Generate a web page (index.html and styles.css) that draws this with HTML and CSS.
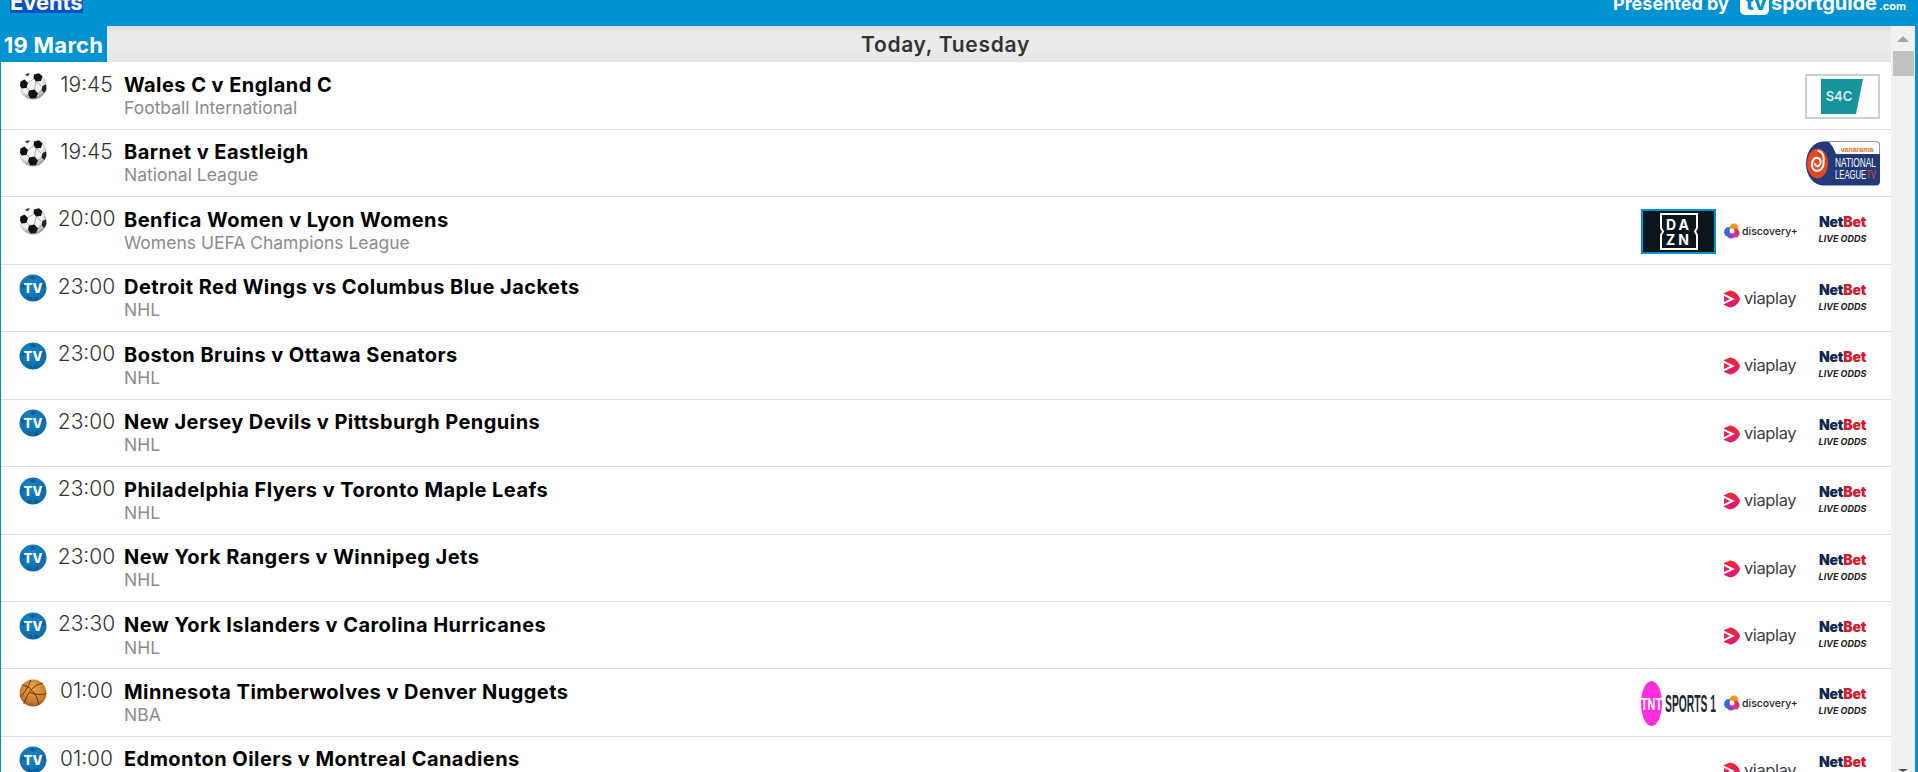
FILE: index.html
```html
<!DOCTYPE html>
<html lang="en">
<head>
<meta charset="utf-8">
<title>Events</title>
<link rel="stylesheet" href="styles.css">
</head>
<body>
<svg class="defs" width="0" height="0">
  <defs>
    <radialGradient id="ballShade" cx="42%" cy="35%" r="72%">
      <stop offset="0" stop-color="#ffffff"/><stop offset=".6" stop-color="#f0f0f0"/><stop offset="1" stop-color="#7a7a7a"/>
    </radialGradient>
    <radialGradient id="bbShade" cx="50%" cy="35%" r="70%">
      <stop offset="0" stop-color="#e9a54c"/><stop offset=".7" stop-color="#c97a2c"/><stop offset="1" stop-color="#8a4a1c"/>
    </radialGradient>
    <radialGradient id="tvShade" cx="45%" cy="35%" r="70%">
      <stop offset="0" stop-color="#1a86c8"/><stop offset="1" stop-color="#0b68a6"/>
    </radialGradient>
    <linearGradient id="viaGrad" x1="0" y1="0" x2="0" y2="1">
      <stop offset="0" stop-color="#ee2a2f"/><stop offset="1" stop-color="#e0187c"/>
    </linearGradient>
    <symbol id="soccer" viewBox="0 0 28 28">
      <circle cx="14" cy="14" r="13.5" fill="url(#ballShade)"/>
      <path d="M15 2.500l5-1.200 3.500 3-1.500 4.700-5 .5-2.500-3.500z" fill="#111"/>
      <path d="M1.500 9.500l4-2 3.500 3.500-1.500 5-5 .5-1.500-3z" fill="#111"/>
      <path d="M10 18.500l5.500-1 3.500 4-2 4.500-5.500 .5-2.500-4z" fill="#111"/>
      <path d="M23.500 14l3.500-1.500 .5 4.500-2 4-3-2.500z" fill="#222"/>
      <path d="M6 2.800l3-1.500 2 .5-2.500 2.500z" fill="#333"/>
      <path d="M15 6.500L9 11M17 9.500l5 4.500M8 15.500l2 3M15.500 17.500l1.500-8M19 21.500l3-2.500M7.500 25l2-3" stroke="#777" stroke-width=".6" fill="none"/>
    </symbol>
    <symbol id="basket" viewBox="0 0 26 26">
      <circle cx="13" cy="13" r="12.500" fill="url(#bbShade)"/>
      <path d="M3 5.500c6 1 13 6 15.500 18.500M11 .8C8 8 5 14 .8 16.500M22 4c-7 1-13 6-17.500 19M10 12.500c5 2 11 2.500 15.500 1" stroke="#5b3216" stroke-width=".9" fill="none"/>
    </symbol>
    <symbol id="tv" viewBox="0 0 28 28">
      <circle cx="14" cy="14" r="13.500" fill="url(#tvShade)"/>
      <path d="M14 1.500l3.500 2.500L14 6l-3.500-2zM3.500 9l3 1-1 4-3.500-1zM24.500 9l-3 1 1 4 3.500-1zM9 22.500l4 1v3.500l-4-1zM19 22.500l-4 1v3.500l4-1z" fill="#0c5f98"/>
      <text x="14" y="19" text-anchor="middle" class="tv-mark">TV</text>
    </symbol>
    <symbol id="viaplay" viewBox="0 0 75 20">
      <path d="M1 4L7 1.500C12 2 16 6 17 10c-1 4-5 8-10 8.500L1 16z" fill="url(#viaGrad)"/>
      <path d="M0 5.500L9.500 10 0 14.500" fill="none" stroke="#ffffff" stroke-width="2"/>
      <text x="21" y="15" class="via-mark">viaplay</text>
    </symbol>
    <symbol id="discovery" viewBox="0 0 75 20">
      <circle cx="6" cy="11" r="5" fill="#2a6fdb"/>
      <circle cx="11" cy="7" r="4.500" fill="#f39a1f"/>
      <circle cx="12" cy="12" r="4.500" fill="#e3306f"/>
      <circle cx="8" cy="14" r="3.500" fill="#8b3fd1"/>
      <circle cx="9" cy="10" r="2.500" fill="#ffffff"/>
      <text x="19" y="14" class="disc-mark">discovery+</text>
    </symbol>
    <symbol id="dazn" viewBox="0 0 75 45">
      <rect x="1" y="1" width="73" height="43" fill="#0b161c" stroke="#0092d1" stroke-width="2"/>
      <path d="M20 5h36v14l-2 3.500 2 3.500v14H20V26l2-3.500-2-3.500z" fill="none" stroke="#ffffff" stroke-width="2"/>
      <text x="38" y="21" text-anchor="middle" class="dazn-mark">DA</text>
      <text x="38" y="36" text-anchor="middle" class="dazn-mark">ZN</text>
    </symbol>
    <symbol id="tnt" viewBox="0 0 75 45">
      <ellipse cx="10.500" cy="22.500" rx="10.500" ry="22.500" fill="#ff2fe0"/>
      <text x="0" y="29" class="tnt-mark" textLength="21" lengthAdjust="spacingAndGlyphs">TNT</text>
      <text x="24" y="31" class="tnt-sports" textLength="51" lengthAdjust="spacingAndGlyphs">SPORTS 1</text>
    </symbol>
    <symbol id="s4c" viewBox="0 0 75 45">
      <rect x="1" y="1" width="73" height="43" fill="#ffffff" stroke="#cfcfcf" stroke-width="2"/>
      <path d="M16 5h42l-7 35H16z" fill="#16939b"/>
      <text x="34" y="27" text-anchor="middle" class="s4c-mark">S4C</text>
    </symbol>
    <symbol id="nltv" viewBox="0 0 75 45">
      <path d="M18 .5h53a4 4 0 0 1 4 4v36a4 4 0 0 1-4 4H18a17 22 0 0 1 0-44z" fill="#22397a"/>
      <path d="M24 1h47a3.500 3.500 0 0 1 3.500 3.500V13H31c-2-5-4-9-7-12z" fill="#ffffff"/>
      <ellipse cx="12.500" cy="22.500" rx="10.500" ry="15" fill="#e8441f"/>
      <path d="M12.500 10c6 0 7 7 6 13-1 7-8 9-11 4-2-5 1-11 5-10 4 .5 4 6 1 8-2 1-4-1-3-3" fill="none" stroke="#ffffff" stroke-width="2"/>
      <text x="52" y="10.500" text-anchor="middle" class="nl-top">vanarama</text>
      <text x="30" y="26" class="nl-mark" textLength="41" lengthAdjust="spacingAndGlyphs">NATIONAL</text>
      <text x="30" y="38" class="nl-mark" textLength="41" lengthAdjust="spacingAndGlyphs">LEAGUE<tspan fill="#e8441f">TV</tspan></text>
    </symbol>
  </defs>
</svg>

<div class="page">
  <header class="topbar">
    <span class="events">Events</span>
    <div class="presented">
      <span class="presented-by">Presented by</span>
      <span class="tv-box">tv</span>
      <span class="brand">sportguide</span><span class="brand-com">.com</span>
    </div>
  </header>
  <div class="main">
    <div class="content">
      <div class="daybar">
        <div class="date">19 March</div>
        <div class="dayname">Today, Tuesday</div>
      </div>
      <div class="rows">
        <div class="row">
          <svg class="sport"><use href="#soccer"/></svg>
          <div class="time">19:45</div>
          <div class="info"><div class="title">Wales C v England C</div><div class="sub">Football International</div></div>
          <div class="slots"><svg class="logo"><use href="#s4c"/></svg></div>
        </div>
        <div class="row">
          <svg class="sport"><use href="#soccer"/></svg>
          <div class="time">19:45</div>
          <div class="info"><div class="title">Barnet v Eastleigh</div><div class="sub">National League</div></div>
          <div class="slots"><svg class="logo"><use href="#nltv"/></svg></div>
        </div>
        <div class="row">
          <svg class="sport"><use href="#soccer"/></svg>
          <div class="time">20:00</div>
          <div class="info"><div class="title">Benfica Women v Lyon Womens</div><div class="sub">Womens UEFA Champions League</div></div>
          <div class="slots">
            <svg class="logo"><use href="#dazn"/></svg>
            <svg class="strip"><use href="#discovery"/></svg>
            <div class="odds"><div class="netbet">Net<span class="bet">Bet</span></div><div class="live">LIVE ODDS</div></div>
          </div>
        </div>
        <div class="row">
          <svg class="sport"><use href="#tv"/></svg>
          <div class="time">23:00</div>
          <div class="info"><div class="title">Detroit Red Wings vs Columbus Blue Jackets</div><div class="sub">NHL</div></div>
          <div class="slots">
            <svg class="strip"><use href="#viaplay"/></svg>
            <div class="odds"><div class="netbet">Net<span class="bet">Bet</span></div><div class="live">LIVE ODDS</div></div>
          </div>
        </div>
        <div class="row">
          <svg class="sport"><use href="#tv"/></svg>
          <div class="time">23:00</div>
          <div class="info"><div class="title">Boston Bruins v Ottawa Senators</div><div class="sub">NHL</div></div>
          <div class="slots">
            <svg class="strip"><use href="#viaplay"/></svg>
            <div class="odds"><div class="netbet">Net<span class="bet">Bet</span></div><div class="live">LIVE ODDS</div></div>
          </div>
        </div>
        <div class="row">
          <svg class="sport"><use href="#tv"/></svg>
          <div class="time">23:00</div>
          <div class="info"><div class="title">New Jersey Devils v Pittsburgh Penguins</div><div class="sub">NHL</div></div>
          <div class="slots">
            <svg class="strip"><use href="#viaplay"/></svg>
            <div class="odds"><div class="netbet">Net<span class="bet">Bet</span></div><div class="live">LIVE ODDS</div></div>
          </div>
        </div>
        <div class="row">
          <svg class="sport"><use href="#tv"/></svg>
          <div class="time">23:00</div>
          <div class="info"><div class="title">Philadelphia Flyers v Toronto Maple Leafs</div><div class="sub">NHL</div></div>
          <div class="slots">
            <svg class="strip"><use href="#viaplay"/></svg>
            <div class="odds"><div class="netbet">Net<span class="bet">Bet</span></div><div class="live">LIVE ODDS</div></div>
          </div>
        </div>
        <div class="row">
          <svg class="sport"><use href="#tv"/></svg>
          <div class="time">23:00</div>
          <div class="info"><div class="title">New York Rangers v Winnipeg Jets</div><div class="sub">NHL</div></div>
          <div class="slots">
            <svg class="strip"><use href="#viaplay"/></svg>
            <div class="odds"><div class="netbet">Net<span class="bet">Bet</span></div><div class="live">LIVE ODDS</div></div>
          </div>
        </div>
        <div class="row">
          <svg class="sport"><use href="#tv"/></svg>
          <div class="time">23:30</div>
          <div class="info"><div class="title">New York Islanders v Carolina Hurricanes</div><div class="sub">NHL</div></div>
          <div class="slots">
            <svg class="strip"><use href="#viaplay"/></svg>
            <div class="odds"><div class="netbet">Net<span class="bet">Bet</span></div><div class="live">LIVE ODDS</div></div>
          </div>
        </div>
        <div class="row">
          <svg class="sport"><use href="#basket"/></svg>
          <div class="time">01:00</div>
          <div class="info"><div class="title">Minnesota Timberwolves v Denver Nuggets</div><div class="sub">NBA</div></div>
          <div class="slots">
            <svg class="logo"><use href="#tnt"/></svg>
            <svg class="strip"><use href="#discovery"/></svg>
            <div class="odds"><div class="netbet">Net<span class="bet">Bet</span></div><div class="live">LIVE ODDS</div></div>
          </div>
        </div>
        <div class="row">
          <svg class="sport"><use href="#tv"/></svg>
          <div class="time">01:00</div>
          <div class="info"><div class="title">Edmonton Oilers v Montreal Canadiens</div><div class="sub">NHL</div></div>
          <div class="slots">
            <svg class="strip"><use href="#viaplay"/></svg>
            <div class="odds"><div class="netbet">Net<span class="bet">Bet</span></div><div class="live">LIVE ODDS</div></div>
          </div>
        </div>
      </div>
    </div>
    <div class="scrollbar">
      <div class="arrow-up"></div>
      <div class="thumb"></div>
      <div class="track"></div>
      <div class="arrow-down"></div>
    </div>
  </div>
</div>
</body>
</html>
```
FILE: styles.css
```css
* { box-sizing: border-box; }
html, body { margin: 0; height: 100%; overflow: hidden; background: #fff; }
.defs { display: block; width: 0; height: 0; }
.page {
  width: 1918px;
  height: 772px;
  display: flex;
  flex-direction: column;
  font-family: Inter, "Liberation Sans", sans-serif;
  overflow: hidden;
}
.topbar {
  flex: 0 0 26px;
  background: #0092d1;
  color: #fff;
  display: flex;
  justify-content: space-between;
  align-items: flex-end;
  padding: 0 12px 13px 10px;
  overflow: hidden;
  line-height: 20px;
}
.events {
  background: #0a50c8;
  width: 73px;
  font-size: 22px;
  font-weight: 700;
  line-height: 22px;
  height: 22px;
  margin-top: -9px;
  letter-spacing: -0.1px;
}
.presented { display: flex; align-items: baseline; height: 20px; margin-top: -7px; }
.presented-by { font-size: 18px; font-weight: 700; margin-right: 9px; letter-spacing: 0; width: 118px; white-space: nowrap; }
.tv-box {
  background: #fff;
  color: #0092d1;
  border-radius: 5px;
  font-size: 20px;
  font-weight: 800;
  padding: 0 6px;
  margin-right: 2px;
  width: 29px;
  height: 21px;
  line-height: 19px;
}
.brand { font-size: 20px; font-weight: 700; letter-spacing: -0.1px; width: 108px; white-space: nowrap; }
.brand-com { font-size: 11px; font-weight: 700; }

.main {
  flex: 1;
  min-height: 0;
  display: flex;
  border-right: 3px solid #0092d1;
  border-left: 1px solid #0092d1;
}
.content { flex: 1; min-width: 0; display: flex; flex-direction: column; }
.daybar {
  position: relative;
  flex: 0 0 36px;
  min-height: 0;
  height: 36px;
  margin-left: -1px;
  background: linear-gradient(#dcdcdc 0, #ebebeb 22%, #ebebeb 65%, #e4e4e4 100%);
  text-align: center;
  font-size: 21px;
  font-weight: 600;
  color: #333;
  line-height: 36px;
  letter-spacing: .7px;
}
.dayname { padding-top: 1px; height: 36px; }
.date {
  position: absolute;
  left: 0;
  top: 0;
  width: 107px;
  height: 36px;
  padding-top: 1px;
  background: #0092d1;
  color: #fff;
  font-size: 22px;
  font-weight: 700;
  text-align: center;
  white-space: nowrap;
  letter-spacing: .3px;
}
.rows { flex: 1; min-height: 0; overflow: hidden; padding-top: .56px; }
.row {
  height: 67.44px;
  border-bottom: 1px solid #e0e0e0;
  display: flex;
  align-items: flex-start;
  padding-right: 11px;
}
.sport {
  flex: 0 0 28px;
  width: 28px;
  height: 28px;
  margin: 9.5px 0 0 18px;
  overflow: visible;
}
.time {
  flex: 0 0 77px;
  padding-left: 2px;
  margin-top: 9px;
  text-align: center;
  font-size: 21px;
  font-weight: 300;
  color: #333;
  line-height: 26px;
}
.info { flex: 1; min-width: 0; }
.title {
  margin-top: 10.5px;
  font-size: 20px;
  font-weight: 700;
  color: #000;
  line-height: 24px;
  letter-spacing: .45px;
  white-space: nowrap;
}
.sub {
  font-size: 17.5px;
  font-weight: 400;
  color: #8c8c8c;
  line-height: 22px;
  white-space: nowrap;
}
.slots { display: flex; align-items: flex-start; gap: 7px; flex: none; margin-top: 11.5px; }
.logo { width: 75px; height: 45px; display: block; }
.strip { width: 75px; height: 20px; display: block; margin-top: 12.5px; }
.odds { width: 75px; text-align: center; margin-top: 5.5px; }
.netbet { font-size: 14px; font-weight: 900; color: #10284d; line-height: 16px; letter-spacing: -0.2px; }
.bet { color: #d21c2e; }
.live { font-size: 9px; font-weight: 700; font-style: italic; color: #222; line-height: 12px; margin-top: 3px; }

.scrollbar {
  flex: 0 0 24px;
  background: #f1f1f1;
  display: flex;
  flex-direction: column;
  align-items: center;
}
.arrow-up {
  width: 0; height: 0;
  margin-top: 10px;
  border-left: 6px solid transparent;
  border-right: 6px solid transparent;
  border-bottom: 6px solid #a3a3a3;
}
.thumb { width: 21px; height: 25px; background: #c1c1c1; margin-top: 9px; }
.track { flex: 1; }
.arrow-down {
  width: 0; height: 0;
  border-left: 5px solid transparent;
  border-right: 5px solid transparent;
  border-top: 3px solid #505050;
}

.tv-mark { font: 800 13px Inter, sans-serif; fill: #fff; }
.via-mark { font: 400 16.500px Inter, sans-serif; fill: #3a4048; letter-spacing: -0.4px; }
.disc-mark { font: 500 10.500px Inter, sans-serif; fill: #222; }
.dazn-mark { font: 700 14px Inter, sans-serif; fill: #fff; letter-spacing: 3px; }
.tnt-mark { font: 700 17px "Liberation Sans", sans-serif; fill: #fff; }
.tnt-sports { font: 700 24px "Liberation Sans", sans-serif; fill: #1e2a33; }
.s4c-mark { font: 600 13px Inter, sans-serif; fill: #d8ecec; }
.nl-top { font: 700 7px "Liberation Sans", sans-serif; fill: #e8701f; }
.nl-mark { font: 400 13px "Liberation Sans", sans-serif; fill: #fff; }
```
